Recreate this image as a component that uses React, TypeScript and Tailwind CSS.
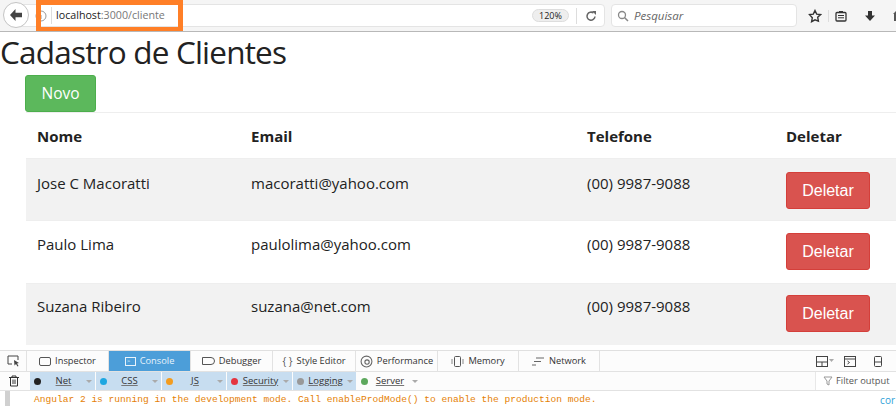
import React from "react";

const rows = [
  ["Jose C Macoratti", "macoratti@yahoo.com", "(00) 9987-9088"],
  ["Paulo Lima", "paulolima@yahoo.com", "(00) 9987-9088"],
  ["Suzana Ribeiro", "suzana@net.com", "(00) 9987-9088"],
];
const rowBox = ["h-[62px] pt-[13px] bg-[#f2f2f2]", "h-[63px] pt-[12px] bg-white", "h-[62px] pt-[11px] bg-[#f2f2f2]"];

const ui = "font-['Open_Sans','Noto_Sans',sans-serif]";

function Toolbar() {
  return (
    <div className="relative flex h-[32px] items-center overflow-hidden border-b border-[#b8b8b8] bg-[#f5f5f5]">
      <div className="absolute left-[3px] top-[2px] z-10 flex h-[26px] w-[26px] items-center justify-center rounded-full border border-[#c4c4c4] bg-white">
        <svg width="16" height="14" viewBox="0 0 16 14"><path d="M7.500 1 2 7l5.500 6V9.200h6.500V4.800H7.500z" fill="#444" /></svg>
      </div>
      <div className="ml-[15px] flex h-[23px] w-[590px] shrink-0 items-center rounded-sm border border-[#e4e4e4] bg-white pl-[19px]">
        <svg width="12" height="12" viewBox="0 0 12 12" className="mr-[4px]"><circle cx="6" cy="6" r="5" fill="none" stroke="#999" /><path d="M6 5v4" stroke="#999" /></svg>
        <div className="mr-[4px] h-[17px] w-px bg-[#ddd]" />
        <span className="text-[10.700px] text-[#222]">localhost<span className="text-[#777]">:3000/cliente</span></span>
        <span className="ml-auto flex h-[13px] w-[37px] items-center justify-center rounded-full border border-[#ddd] bg-[#eee] text-[9px] text-[#222]">120%</span>
        <div className="mx-[7px] h-[16px] w-px bg-[#ddd]" />
        <svg width="12" height="12" viewBox="0 0 12 12" className="ml-[1px] mr-[7px]"><path d="M10 6.500A4 4 0 1 1 8.500 3" fill="none" stroke="#666" strokeWidth="1.500" /><path d="M7 1h4v4z" fill="#666" /></svg>
      </div>
      <div className="ml-[6px] flex h-[23px] w-[186px] shrink-0 items-center rounded-sm border border-[#e4e4e4] bg-white pl-[5px]">
        <svg width="12" height="12" viewBox="0 0 12 12" className="mr-[5px]"><circle cx="5" cy="5" r="3.500" fill="none" stroke="#888" strokeWidth="1.300" /><path d="m7.500 7.500 3.500 3.500" stroke="#888" strokeWidth="1.500" /></svg>
        <span className="text-[11.500px] italic text-[#666]">Pesquisar</span>
      </div>
      <div className="ml-[11px] flex shrink-0 items-center">
        <svg width="14" height="14" viewBox="0 0 14 14"><path d="m7 1.500 1.700 3.600 3.800.5-2.800 2.700.7 3.900L7 10.800l-3.400 1.900.7-3.900L1.500 5.600l3.800-.5z" fill="none" stroke="#333" strokeWidth="1.400" /></svg>
        <div className="mx-[6px] h-[12px] w-px bg-[#ddd]" />
        <svg width="12" height="12" viewBox="0 0 12 12"><rect x="1" y="2.500" width="10" height="8.500" rx="1" fill="none" stroke="#333" strokeWidth="1.300" /><path d="M3 5.500h6M3 7.800h6" stroke="#333" /><rect x="4" y="1" width="4" height="2" fill="#333" /></svg>
        <svg width="12" height="12" viewBox="0 0 12 12" className="ml-[17px]"><path d="M4 1h4v4.500h3L6 11 1 5.500h3z" fill="#333" /></svg>
        <svg width="3" height="10" viewBox="0 0 3 10" className="ml-[17px]"><path d="M0 3 3 0v10H1V3z" fill="#555" /></svg>
      </div>
      <div className="absolute left-[36px] top-0 h-[32px] w-[147px] border-[5px] border-[#ff7f27]" />
    </div>
  );
}

function Tab({ icon, label, w, active }: { icon: React.ReactNode; label: string; w: string; active?: boolean }) {
  return (
    <div className={`flex h-[20px] items-center justify-center gap-[4px] border-r border-[#e2e2e2] ${w} ${active ? "bg-[#4c9ed9] text-[#e8f3fb]" : "text-[#333]"}`}>
      {icon}
      <span className="text-[9.300px]">{label}</span>
    </div>
  );
}

function Filter({ color, label, w, on = true }: { color: string; label: string; w: string; on?: boolean }) {
  return (
    <div className={`flex h-[18px] items-center border-r border-[#fcfcfc] pl-[4px] pr-[3px] ${w} ${on ? "bg-[#c7ddf0]" : ""}`}>
      <span className={`h-[7px] w-[7px] rounded-full ${color}`} />
      <span className="flex-1 text-center text-[9.500px] text-[#333] underline decoration-[#777]">{label}</span>
      <span className="h-0 w-0 border-x-[3px] border-t-[3px] border-x-transparent border-t-[#aaa]" />
    </div>
  );
}

export default function App() {
  return (
    <div className={`flex h-[406px] w-[896px] flex-col overflow-hidden bg-white ${ui}`}>
      <Toolbar />
      <h1 className="h-[43px] text-[31.500px] font-normal leading-[40px] tracking-[-0.8px] text-[#222]">Cadastro de Clientes</h1>
      <div className="pl-[25px]">
        <button className="h-[37px] w-[71px] rounded-[3px] border border-[#4cae4c] bg-[#5cb85c] text-[15.500px] text-white">Novo</button>
      </div>
      <div className="ml-[26px] border-t border-[#eee] text-[#222]">
        <div className="grid h-[45px] grid-cols-[214px_336px_199px_1fr] items-center pl-[11px] pt-[2px] text-[15px] font-bold">
          <span>Nome</span><span>Email</span><span>Telefone</span><span>Deletar</span>
        </div>
        {rows.map((r, i) => (
          <div key={r[0]} className={`grid grid-cols-[214px_336px_199px_1fr] border-t border-[#eeeeee] pl-[11px] text-[15px] leading-[23px] ${rowBox[i]}`}>
            {r.map((c) => <span key={c}>{c}</span>)}
            <span>
              <button className="h-[37px] w-[84px] rounded-[3px] border border-[#d43f3a] bg-[#d9534f] font-['Liberation_Sans',sans-serif] text-[16px] text-white">Deletar</button>
            </span>
          </div>
        ))}
      </div>
      <div className="mt-[5px] flex-1 border-t border-[#e0e0e0] bg-white">
        <div className="flex h-[21px] items-center border-b border-[#e2e2e2] bg-[#fcfcfc]">
          <div className="flex h-[20px] w-[27px] items-center justify-center border-r border-[#e2e2e2]">
            <svg width="13" height="12" viewBox="0 0 13 12"><path d="M5 9H1V1h10v4" fill="none" stroke="#444" /><path d="m7 5 5 3-2 .5L11.500 11l-1 .5L9 9l-1.500 1.500z" fill="#444" /></svg>
          </div>
          <Tab w="w-[82px]" label="Inspector" icon={<span className="h-[9px] w-[12px] rounded-[2px] border border-[#555]" />} />
          <Tab w="w-[82px]" active label="Console" icon={<span className="flex h-[9px] w-[11px] items-center border border-[#e8f3fb] pl-px text-[6px] leading-none">{">"}</span>} />
          <Tab w="w-[82px]" label="Debugger" icon={<span className="h-[8px] w-[13px] rounded-r-full border border-[#555]" />} />
          <Tab w="w-[83px]" label="Style Editor" icon={<span className="text-[10px] text-[#555]">{"{ }"}</span>} />
          <Tab w="w-[82px]" label="Performance" icon={<svg width="13" height="13" viewBox="0 0 12 12"><circle cx="6" cy="6" r="5" fill="none" stroke="#666" /><circle cx="6.500" cy="6.500" r="2" fill="none" stroke="#666" /></svg>} />
          <Tab w="w-[81px]" label="Memory" icon={<svg width="13" height="11" viewBox="0 0 13 11"><rect x="3.500" y=".5" width="6" height="10" rx="1" fill="none" stroke="#555" /><path d="M1 3v5M12 3v5" stroke="#888" /></svg>} />
          <Tab w="w-[81px]" label="Network" icon={<svg width="13" height="9" viewBox="0 0 13 9"><path d="M4 1h8M2 4.500h7M0 8h4" stroke="#666" /></svg>} />
          <div className="ml-auto mr-[14px] flex items-center gap-[10px]">
            <svg width="18" height="11" viewBox="0 0 18 11"><rect x=".5" y=".5" width="11" height="10" fill="none" stroke="#444" /><path d="M1 6h10M6 6v4" stroke="#444" /><path d="m13 3 5 0-2.500 3z" fill="#aaa" /></svg>
            <svg width="12" height="11" viewBox="0 0 12 11"><rect x=".5" y=".5" width="11" height="10" fill="none" stroke="#444" /><path d="M1 3h10" stroke="#444" /><path d="m3.500 5 2 1.500-2 1.500" fill="none" stroke="#444" /></svg>
            <svg width="8" height="11" viewBox="0 0 8 11" className="ml-[8px]"><rect x=".5" y=".5" width="7" height="10" rx="1" fill="none" stroke="#444" /><path d="M1 6h6" stroke="#444" /></svg>
          </div>
        </div>
        <div className="flex h-[19px] items-center border-b border-[#e2e2e2] bg-[#fcfcfc]">
          <svg width="12" height="12" viewBox="0 0 12 12" className="ml-[8px] mr-[10px]"><path d="M1 2.500h10M4 2.500V1h4v1.500M2.500 2.500V11h7V2.500M5 4.500V9M7 4.500V9" fill="none" stroke="#333" /></svg>
          <Filter w="w-[66px]" color="bg-[#222]" label="Net" />
          <Filter w="w-[66px]" color="bg-[#1ea7e1]" label="CSS" />
          <Filter w="w-[65px]" color="bg-[#f39c1f]" label="JS" />
          <Filter w="w-[66px]" color="bg-[#e5343f]" label="Security" />
          <Filter w="w-[64px]" color="bg-[#999]" label="Logging" />
          <Filter w="w-[65px]" color="bg-[#5da85d]" label="Server" on={false} />
          <div className="ml-auto flex h-[18px] w-[81px] items-center gap-[3px] border-l border-[#e8e8e8] bg-white pl-[7px]">
            <svg width="10" height="10" viewBox="0 0 10 10"><path d="M1 1h8L6 5v4L4 8V5z" fill="none" stroke="#999" /></svg>
            <span className="text-[9.300px] text-[#555]">Filter output</span>
          </div>
        </div>
        <div className="flex h-[15px]">
          <div className="ml-[5px] w-[5px] bg-[#d0d0d0]" />
          <div className="flex flex-1 items-center pl-[24px] pr-[1px] pt-[3px] font-['Liberation_Mono',monospace] text-[9.570px] text-[#e57f05]">
            <span>Angular 2 is running in the development mode. Call enableProdMode() to enable the production mode.</span>
            <span className="ml-auto font-['Open_Sans',sans-serif] text-[10px] text-[#2f9fd8]">cor</span>
          </div>
        </div>
      </div>
    </div>
  );
}
